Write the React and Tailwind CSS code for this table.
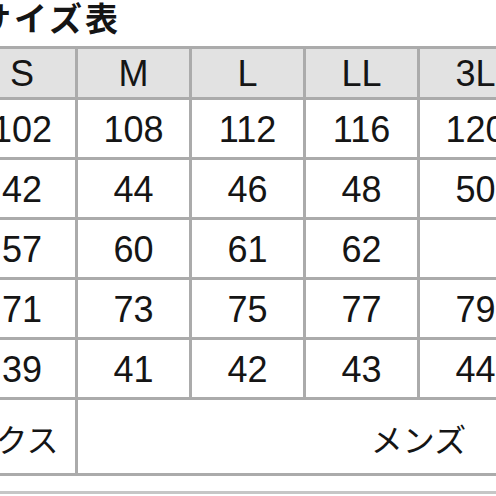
import React from "react";

const header = ["", "S", "M", "L", "LL", "3L", "4L", "5L"];
const rows = [
  ["", "102", "108", "112", "116", "120", "124", "128"],
  ["", "42", "44", "46", "48", "50", "52", "54"],
  ["", "57", "60", "61", "62", "", "", ""],
  ["", "71", "73", "75", "77", "79", "81", "83"],
  ["", "39", "41", "42", "43", "44", "45", "46"],
];

export default function App() {
  return (
    <div className="w-[496px] h-[496px] overflow-hidden bg-white text-[#151515] font-[family-name:'Liberation_Sans','Noto_Sans_CJK_JP',sans-serif]">
      <div className="ml-[-22px] mt-[1px] h-[32px] leading-[32px] text-[33px] font-bold tracking-[3px] whitespace-nowrap font-[family-name:'Noto_Sans_CJK_JP',sans-serif]">
        サイズ表
      </div>
      <div className="ml-[-152px] mt-[13px] w-max grid grid-cols-[115px_106px_111px_111px_111px_111px_111px_111px] grid-rows-[48px_57px_57px_57px_57px_57px_73px] gap-[3px] p-[3px] bg-[#ababab]">
        {header.map((h, i) => (
          <div key={"h" + i} className="bg-[#e2e2e2] flex items-center justify-center text-[36px] leading-none pt-[2px]">
            {h}
          </div>
        ))}
        {rows.map((r, ri) =>
          r.map((c, ci) => (
            <div key={ri + "-" + ci} className="bg-white flex items-center justify-center text-[36px] leading-none pt-[3px]">
              {c}
            </div>
          ))
        )}
        <div className="col-span-2 bg-white flex items-center justify-center text-[32px] leading-none pt-[2px] font-[family-name:'Noto_Sans_CJK_JP',sans-serif]">
          ユニセックス
        </div>
        <div className="col-span-6 bg-white flex items-center justify-center text-[32px] leading-none pt-[2px] font-[family-name:'Noto_Sans_CJK_JP',sans-serif]">
          メンズ
        </div>
      </div>
      <div className="mt-[15px] h-[3px] w-full bg-[#c6c6c6]"></div>
    </div>
  );
}
